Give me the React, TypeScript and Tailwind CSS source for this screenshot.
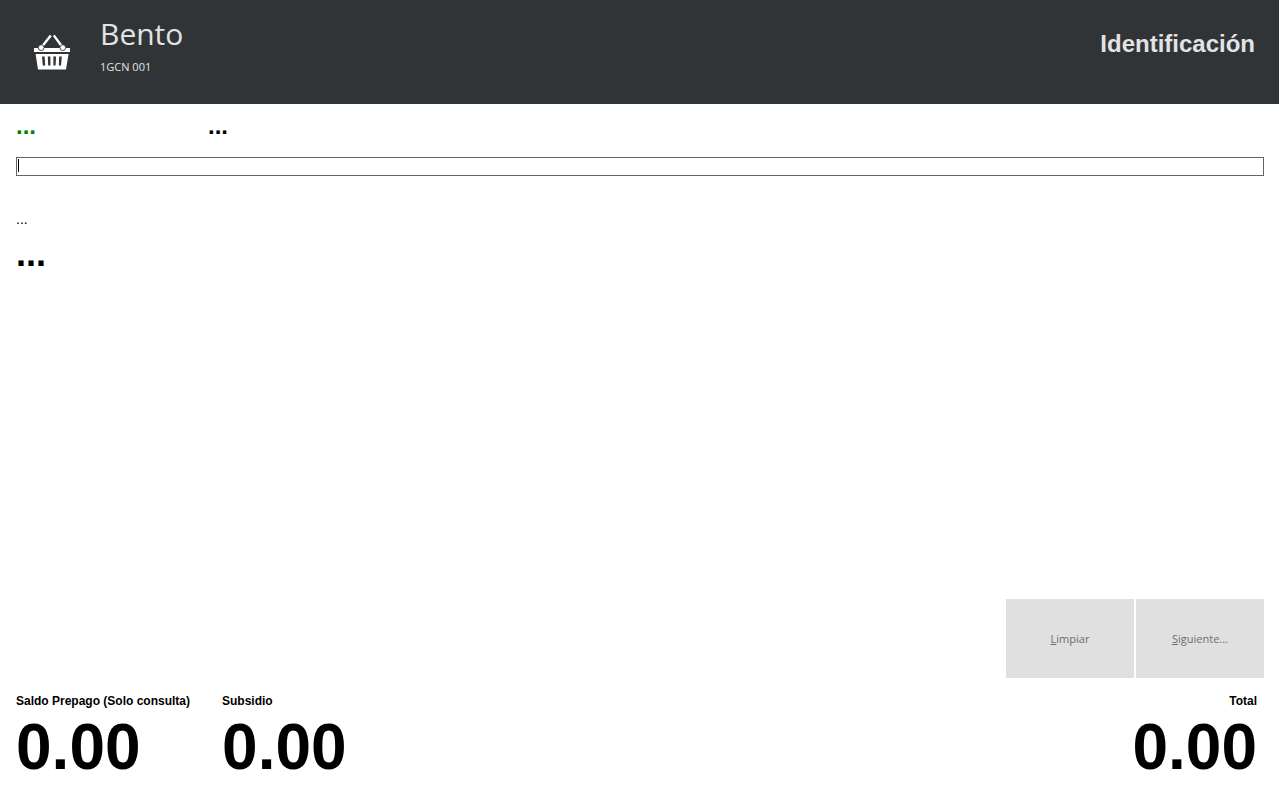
import { useState } from 'react';
import { clsx } from 'clsx';

const totals = [
  { id: 'saldo', label: 'Saldo Prepago (Solo consulta)', value: 0 },
  { id: 'subsidio', label: 'Subsidio', value: 0 },
  { id: 'total', label: 'Total', value: 0 },
];

const actions = [
  { key: 'L', rest: 'impiar', type: 'reset' as const },
  { key: 'S', rest: 'iguiente...', type: 'submit' as const },
];

function BasketIcon() {
  return (
    <svg viewBox="0 0 36 36" className="w-9 h-9" fill="none" aria-hidden="true">
      {/* Handles */}
      <path d="M8 12.5 16.8 1.4M28 12.5 19.8 1.4" stroke="#fff" strokeWidth="2.4" />
      {/* Rim and body */}
      <path d="M0 14h36v4H0zM1.6 20h33L32 35.4H4z" fill="#fff" />
      <path d="M8 22.5h2.6l.6 9H8.8zM13.8 22.5h2.6v9h-2.2zM19.4 22.5H22l-.4 9h-2.2zM25.2 22.5h2.6l-.8 9h-2.2z" fill="#313437" />
      {/* Hinges */}
      <circle cx="7.2" cy="13.6" r="2.9" fill="#fff" stroke="#313437" strokeWidth="0.9" />
      <circle cx="28.8" cy="13.6" r="2.9" fill="#fff" stroke="#313437" strokeWidth="0.9" />
    </svg>
  );
}

function Header() {
  return (
    <header className="flex justify-between h-26 pl-[34px] pr-6 bg-[#313437] text-[#e3e3e3]">
      <div className="flex gap-[30px]">
        <div className="pt-[34px]">
          <BasketIcon />
        </div>
        <div className="pt-4 font-['Open_Sans',sans-serif]">
          <h1 className="text-[30px] leading-9">Bento</h1>
          <p className="pt-[7px] text-[11px] leading-4">1GCN 001</p>
        </div>
      </div>
      <h2 className="pt-7 text-2xl font-bold">Identificación</h2>
    </header>
  );
}

export default function App() {
  const [code, setCode] = useState('');

  return (
    <div className="flex flex-col min-h-screen bg-white text-black font-['Liberation_Sans',Arial,sans-serif]">
      <Header />

      <form
        className="flex flex-col flex-1 px-4 pt-2"
        onSubmit={e => e.preventDefault()}
        onReset={() => setCode('')}
      >
        <div className="flex text-2xl leading-7 font-bold">
          <span className="w-48 text-[#008000]">...</span>
          <span>...</span>
        </div>

        <div className="relative mt-[17px] -mr-px">
          <input
            type="text"
            aria-label="Identificación"
            value={code}
            onChange={e => setCode(e.target.value)}
            className="block w-full h-[19px] px-0.5 border border-[#646464] text-xs outline-none peer"
          />
          {code === '' && <span className="absolute left-0.5 top-0.5 w-px h-[13px] bg-black peer-focus:hidden" />}
        </div>

        <p className="pt-[33px] text-sm">...</p>
        <p className="pt-[5px] text-4xl font-bold">...</p>

        <div className="flex justify-end gap-0.5 mt-auto -mr-px">
          {actions.map(action => (
            <button
              key={action.key}
              type={action.type}
              className="w-32 h-[79px] pt-0.5 bg-[#e0e0e0] text-[#6d6d6d] text-[11px] font-['Open_Sans',sans-serif]"
            >
              <span className="underline underline-offset-1">{action.key}</span>
              {action.rest}
            </button>
          ))}
        </div>
      </form>

      <footer className="flex gap-8 pl-4 pr-[22px] pt-[15px] pb-5">
        {totals.map(item => (
          <dl key={item.id} className={clsx(item.id === 'total' && 'ml-auto text-right')}>
            <dt className="text-xs leading-4 font-bold">{item.label}</dt>
            <dd className="pt-1.5 text-[64px] leading-16 font-bold">{item.value.toFixed(2)}</dd>
          </dl>
        ))}
      </footer>
    </div>
  );
}
